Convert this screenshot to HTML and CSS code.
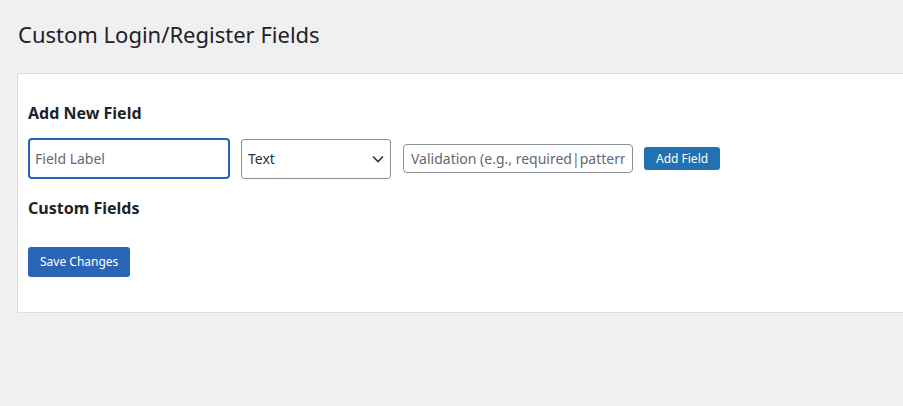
FILE: index.html
```html
<!DOCTYPE html>
<html lang="en">
<head>
<meta charset="utf-8">
<title>Custom Login/Register Fields</title>
<link rel="stylesheet" href="styles.css">
</head>
<body>
<div class="wrap">
  <h1 class="page-title">Custom Login/Register Fields</h1>
  <div class="card">
    <h2 class="section-title">Add New Field</h2>
    <div class="field-row">
      <input class="label-input" type="text" placeholder="Field Label">
      <div class="select-box">
        <span class="select-text">Text</span>
        <svg class="chevron" width="12" height="8" viewBox="0 0 12 8"><path d="M1 1.5 L6 6.5 L11 1.5" fill="none" stroke="#2c3338" stroke-width="1.6"/></svg>
      </div>
      <input class="validation-input" type="text" placeholder="Validation (e.g., required|pattern=...)">
      <button class="btn-add" type="button">Add Field</button>
    </div>
    <h2 class="section-title custom">Custom Fields</h2>
    <button class="btn-save" type="button">Save Changes</button>
  </div>
</div>
</body>
</html>
```
FILE: styles.css
```css
html, body {
  margin: 0;
  padding: 0;
  background: #f0f0f1;
  overflow: hidden;
}
body {
  font-family: "Noto Sans", "Open Sans", sans-serif;
  color: #1d2327;
  width: 903px;
  height: 406px;
}
.wrap {
  padding: 18px 0 0 17px;
}
.page-title {
  margin: 0 0 0 1px;
  font-size: 22px;
  font-weight: 400;
  line-height: 32px;
  color: #1d2327;
}
.card {
  margin-top: 23px;
  width: 886px;
  background: #fff;
  border: 1px solid #dcdcde;
  border-right: none;
  border-radius: 2px 0 0 2px;
  padding: 27px 10px 35px 10px;
  box-sizing: border-box;
}
.section-title {
  margin: 0;
  font-size: 16px;
  font-weight: 700;
  line-height: 24px;
  color: #1d2327;
}
.field-row {
  display: flex;
  align-items: center;
  margin-top: 13px;
}
.label-input {
  width: 202px;
  height: 41px;
  box-sizing: border-box;
  border: 2px solid #2b62b3;
  border-radius: 4px;
  padding: 0 5px;
  font-family: inherit;
  font-size: 14px;
  color: #2c3338;
  outline: none;
}
.label-input::placeholder,
.validation-input::placeholder {
  color: #646970;
  opacity: 1;
}
.select-box {
  margin-left: 11px;
  width: 150px;
  height: 40px;
  box-sizing: border-box;
  border: 1px solid #8c8f94;
  border-radius: 3px;
  display: flex;
  align-items: center;
  justify-content: space-between;
  padding: 0 6px 0 6px;
  font-size: 14px;
  color: #2c3338;
}
.chevron {
  display: block;
}
.validation-input {
  margin-left: 12px;
  width: 230px;
  height: 29px;
  box-sizing: border-box;
  border: 1px solid #8c8f94;
  border-radius: 4px;
  padding: 0 7px;
  font-family: inherit;
  font-size: 14px;
  color: #2c3338;
  outline: none;
}
.btn-add {
  margin-left: 11px;
  height: 23px;
  padding: 0 12px;
  background: #2271b1;
  color: #fff;
  border: none;
  border-radius: 3px;
  font-family: inherit;
  font-size: 12px;
  line-height: 23px;
  cursor: pointer;
}
.section-title.custom {
  margin-top: 17px;
}
.btn-save {
  margin-top: 27px;
  display: block;
  height: 30px;
  padding: 0 12px;
  background: #2b64b5;
  color: #fff;
  border: none;
  border-radius: 3px;
  font-family: inherit;
  font-size: 12px;
  line-height: 30px;
  cursor: pointer;
}
```
